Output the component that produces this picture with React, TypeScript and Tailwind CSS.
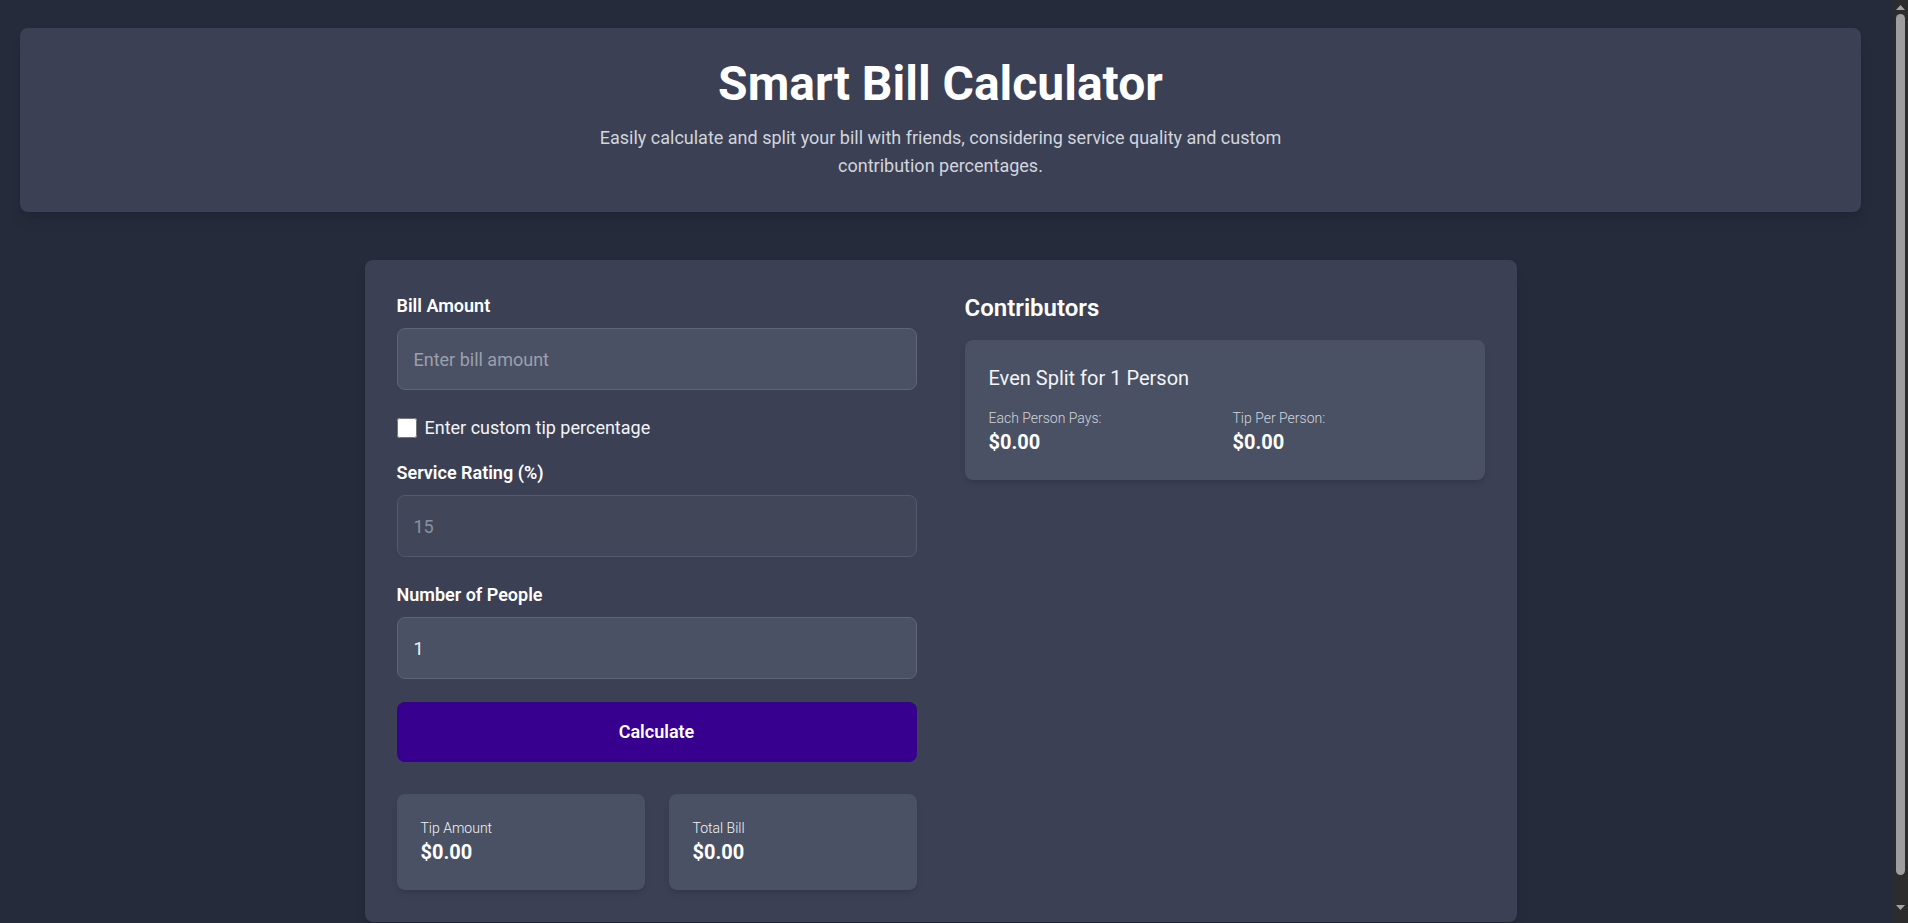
import { useState } from "react";

type Stat = { label: string; value: string };

function ResultBox({ label, value }: Stat) {
  return (
    <div className="rounded-lg bg-[#4a5164] p-6 shadow-md">
      <p className="text-sm font-light text-gray-100">{label}</p>
      <p className="text-xl font-bold text-white">{value}</p>
    </div>
  );
}

// headless capture hides the native scrollbar, so the page's one is drawn here
function ScrollBar() {
  return (
    <div className="flex h-screen w-[15px] shrink-0 flex-col items-center bg-[#2c2c2c]">
      <div className="flex h-[14px] items-center justify-center">
        <svg width="9" height="5" viewBox="0 0 9 5">
          <path d="M0 5 L4.5 0 L9 5 Z" fill="#a3a3a3" />
        </svg>
      </div>
      <div className="h-[861px] w-[9px] rounded-full bg-[#9e9e9e]" />
      <div className="flex-1" />
      <div className="flex h-[18px] items-start justify-center">
        <svg width="9" height="5" viewBox="0 0 9 5">
          <path d="M0 0 L9 0 L4.5 5 Z" fill="#a3a3a3" />
        </svg>
      </div>
    </div>
  );
}

export default function App() {
  const [bill, setBill] = useState("");
  const [people, setPeople] = useState("1");
  const [customTip, setCustomTip] = useState(false);

  const fieldClass =
    "h-[62px] w-full rounded-lg border border-[#5f6577] bg-[#4a5164] px-4 text-lg text-gray-100 outline-none placeholder:text-[#9aa0ad]";

  return (
    <div className="flex h-screen overflow-hidden bg-[#252b3b] font-['Roboto',sans-serif] text-white">
      <div className="h-screen min-w-0 flex-1 overflow-hidden">
        <div className="pl-5 pr-8 pt-7 pb-9">
          <header className="rounded-lg bg-[#3b4055] py-8 text-center shadow-lg">
            <h1 className="text-5xl font-bold">Smart Bill Calculator</h1>
            <p className="mx-auto mt-4 max-w-[700px] text-lg text-gray-300">
              Easily calculate and split your bill with friends, considering service quality and
              custom contribution percentages.
            </p>
          </header>

          <main className="mx-auto mt-12 max-w-6xl rounded-lg bg-[#3b4055] p-8 shadow-lg">
            <div className="grid grid-cols-2 gap-12">
              <div>
                <label className="mb-2 block text-lg font-semibold">Bill Amount</label>
                <input
                  type="number"
                  value={bill}
                  onChange={(e) => setBill(e.target.value)}
                  placeholder="Enter bill amount"
                  className={fieldClass}
                />

                <label className="mt-6 flex items-center gap-2 text-lg text-gray-100">
                  <input
                    type="checkbox"
                    checked={customTip}
                    onChange={(e) => setCustomTip(e.target.checked)}
                    className="h-5 w-5 scheme-light"
                  />
                  Enter custom tip percentage
                </label>

                <label className="mt-[17px] mb-2 block text-lg font-semibold">
                  Service Rating (%)
                </label>
                <input
                  type="number"
                  value="15"
                  disabled
                  readOnly
                  className="h-[62px] w-full rounded-lg border border-[#535a6c] bg-[#414759] px-4 text-lg text-[#8a90a0] outline-none"
                />

                <label className="mt-6 mb-2 block text-lg font-semibold">Number of People</label>
                <input
                  type="number"
                  value={people}
                  onChange={(e) => setPeople(e.target.value)}
                  className={fieldClass}
                />

                <button
                  type="button"
                  className="mt-[23px] h-[60px] w-full rounded-lg bg-[#37008f] text-lg font-semibold text-white"
                >
                  Calculate
                </button>

                <div className="mt-8 grid grid-cols-2 gap-6">
                  <ResultBox label="Tip Amount" value="$0.00" />
                  <ResultBox label="Total Bill" value="$0.00" />
                </div>
              </div>

              <div>
                <h2 className="mb-4 text-2xl font-semibold">Contributors</h2>
                <div className="rounded-lg bg-[#4a5164] p-6 shadow-md">
                  <h3 className="mb-4 text-xl text-gray-100">
                    Even Split for {people || 0} Person
                  </h3>
                  <div className="grid grid-cols-2 gap-4">
                    <div>
                      <p className="text-sm font-light text-gray-300">Each Person Pays:</p>
                      <p className="text-xl font-bold">$0.00</p>
                    </div>
                    <div>
                      <p className="text-sm font-light text-gray-300">Tip Per Person:</p>
                      <p className="text-xl font-bold">$0.00</p>
                    </div>
                  </div>
                </div>
              </div>
            </div>
          </main>
        </div>
      </div>
      <ScrollBar />
    </div>
  );
}
